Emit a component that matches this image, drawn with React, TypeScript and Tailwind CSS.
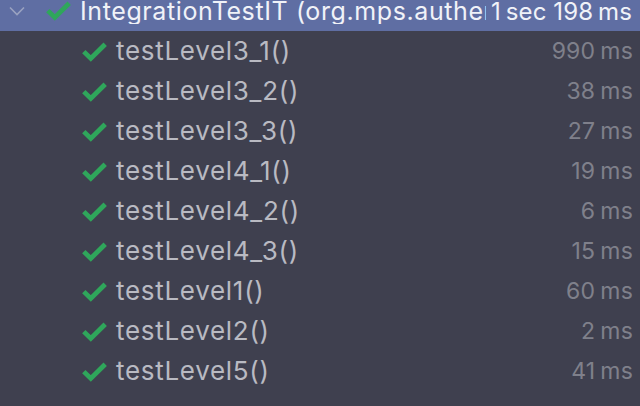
import React from "react";

const rows: [string, string][] = [
  ["testLevel3_1()", "990"],
  ["testLevel3_2()", "38"],
  ["testLevel3_3()", "27"],
  ["testLevel4_1()", "19"],
  ["testLevel4_2()", "6"],
  ["testLevel4_3()", "15"],
  ["testLevel1()", "60"],
  ["testLevel2()", "2"],
  ["testLevel5()", "41"],
];

function Check() {
  return (
    <svg width="25" height="20" viewBox="0 0 25 20" className="shrink-0">
      <polyline
        points="1.8,9.6 8.8,16.4 23.2,2.2"
        fill="none"
        stroke="#2fa65b"
        strokeWidth="4.8"
        strokeLinejoin="miter"
      />
    </svg>
  );
}

export default function App() {
  return (
    <div
      className="w-[640px] h-[406px] bg-[#3f404f] overflow-hidden"
      style={{ fontFamily: "Inter, 'Noto Sans', sans-serif" }}
    >
      <div className="h-[31px] bg-[#5f6ea3] flex items-center text-[25px] text-[#f0f2f8] pr-[8px]">
        <svg width="16" height="10" viewBox="0 0 16 10" className="ml-[9px] mt-[-10px] shrink-0">
          <polyline points="1,1.5 8,8.5 15,1.5" fill="none" stroke="#9aa2c0" strokeWidth="1.6" />
        </svg>
        <div className="ml-[21px] mt-[-10px]">
          <Check />
        </div>
        <div className="ml-[9px] w-[406px] shrink-0 overflow-hidden whitespace-nowrap mt-[-8px] leading-none tracking-[0.6px]">
          IntegrationTestIT (org.mps.authentication)
        </div>
        <div className="ml-auto whitespace-nowrap mt-[-8px] leading-none text-[24px] tracking-[0.1px]">
          1<span className="ml-[5px]">sec</span> 198<span className="ml-[5px]">ms</span>
        </div>
      </div>
      {rows.map(([name, ms]) => (
        <div key={name} className="h-[40px] flex items-center pr-[7px]">
          <div className="ml-[82px] mt-[1px]">
            <Check />
          </div>
          <div className="ml-[9px] text-[26px] tracking-[0.7px] text-[#b9bac2] leading-none whitespace-nowrap">{name}</div>
          <div className="ml-auto text-[23px] text-[#7f808b] leading-none whitespace-nowrap tracking-[0.2px]">
            {ms}
            <span className="ml-[5px]">ms</span>
          </div>
        </div>
      ))}
    </div>
  );
}
